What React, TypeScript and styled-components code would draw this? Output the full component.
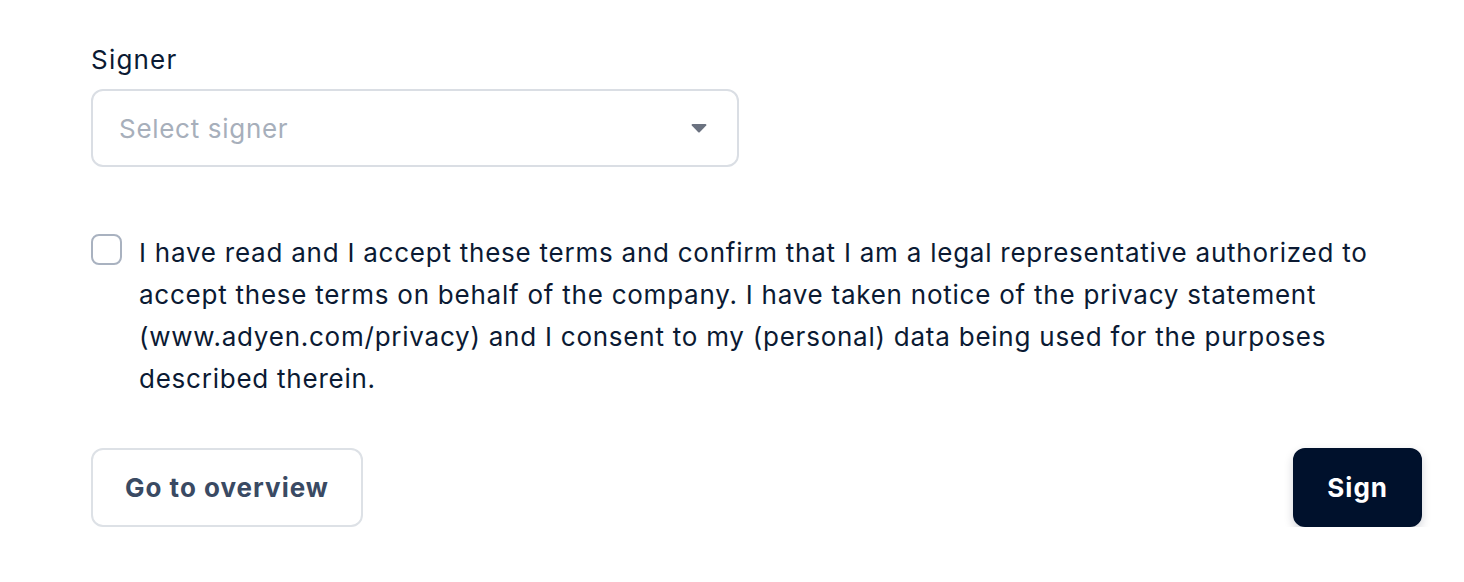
import styled, { createGlobalStyle } from 'styled-components';

const GlobalStyle = createGlobalStyle`
  body {
    margin: 0;
    background: #ffffff;
    font-family: Inter, "Noto Sans", sans-serif;
    color: #0b1a33;
    letter-spacing: 1px;
  }
`;

const Page = styled.div`
  padding: 42px 42px 0 91px;
  display: flex;
  flex-direction: column;
`;

const Label = styled.label`
  font-size: 26px;
  line-height: 36px;
  letter-spacing: 1.2px;
  color: #0b1a33;
  margin-bottom: 11px;
`;

const SelectBox = styled.div`
  width: 648px;
  height: 78px;
  box-sizing: border-box;
  border: 2px solid #dadee4;
  border-radius: 12px;
  display: flex;
  align-items: center;
  justify-content: space-between;
  padding: 0 30px 0 26px;
`;

const Placeholder = styled.span`
  font-size: 26px;
  letter-spacing: 0.7px;
  color: #a7afbb;
`;

const ConsentRow = styled.div`
  margin-top: 65px;
  display: flex;
  gap: 17px;
  align-items: flex-start;
`;

const CheckBox = styled.span`
  flex: none;
  width: 31px;
  height: 31px;
  box-sizing: border-box;
  border: 2px solid #a9b2c0;
  border-radius: 8px;
  margin-top: 2px;
`;

const ConsentText = styled.p`
  margin: 0;
  font-size: 26px;
  line-height: 42px;
  letter-spacing: 0.76px;
  color: #0b1a33;
  max-width: 1260px;
`;

const Actions = styled.div`
  margin-top: 48px;
  display: flex;
  justify-content: space-between;
  align-items: center;
`;

const Button = styled.button<{ $primary?: boolean }>`
  height: 79px;
  box-sizing: border-box;
  border-radius: 12px;
  font-family: Inter, "Noto Sans", sans-serif;
  font-size: 26px;
  font-weight: 700;
  letter-spacing: 1px;
  padding: 0 32px;
  cursor: pointer;
  border: 2px solid ${(p) => (p.$primary ? '#00112c' : '#dde1e6')};
  background: ${(p) => (p.$primary ? '#00112c' : '#ffffff')};
  color: ${(p) => (p.$primary ? '#ffffff' : '#3a4a63')};
  box-shadow: ${(p) => (p.$primary ? '0 4px 10px rgba(0, 17, 44, 0.18)' : 'none')};
`;

function Caret() {
  return (
    <svg width="16" height="10" viewBox="0 0 16 10">
      <path d="M1.5 1h13c.8 0 1.2.9.7 1.5L8.7 9.2c-.4.4-1 .4-1.4 0L.8 2.5C.3 1.9.7 1 1.5 1z" fill="#6b7280" />
    </svg>
  );
}

export default function App(): JSX.Element {
  return (
    <>
      <GlobalStyle />
      <Page>
        <Label>Signer</Label>
        <SelectBox>
          <Placeholder>Select signer</Placeholder>
          <Caret />
        </SelectBox>
        <ConsentRow>
          <CheckBox />
          <ConsentText>
            I have read and I accept these terms and confirm that I am a legal representative authorized to
            accept these terms on behalf of the company. I have taken notice of the privacy statement
            (www.adyen.com/privacy) and I consent to my (personal) data being used for the purposes
            described therein.
          </ConsentText>
        </ConsentRow>
        <Actions>
          <Button>Go to overview</Button>
          <Button $primary>Sign</Button>
        </Actions>
      </Page>
    </>
  );
}
